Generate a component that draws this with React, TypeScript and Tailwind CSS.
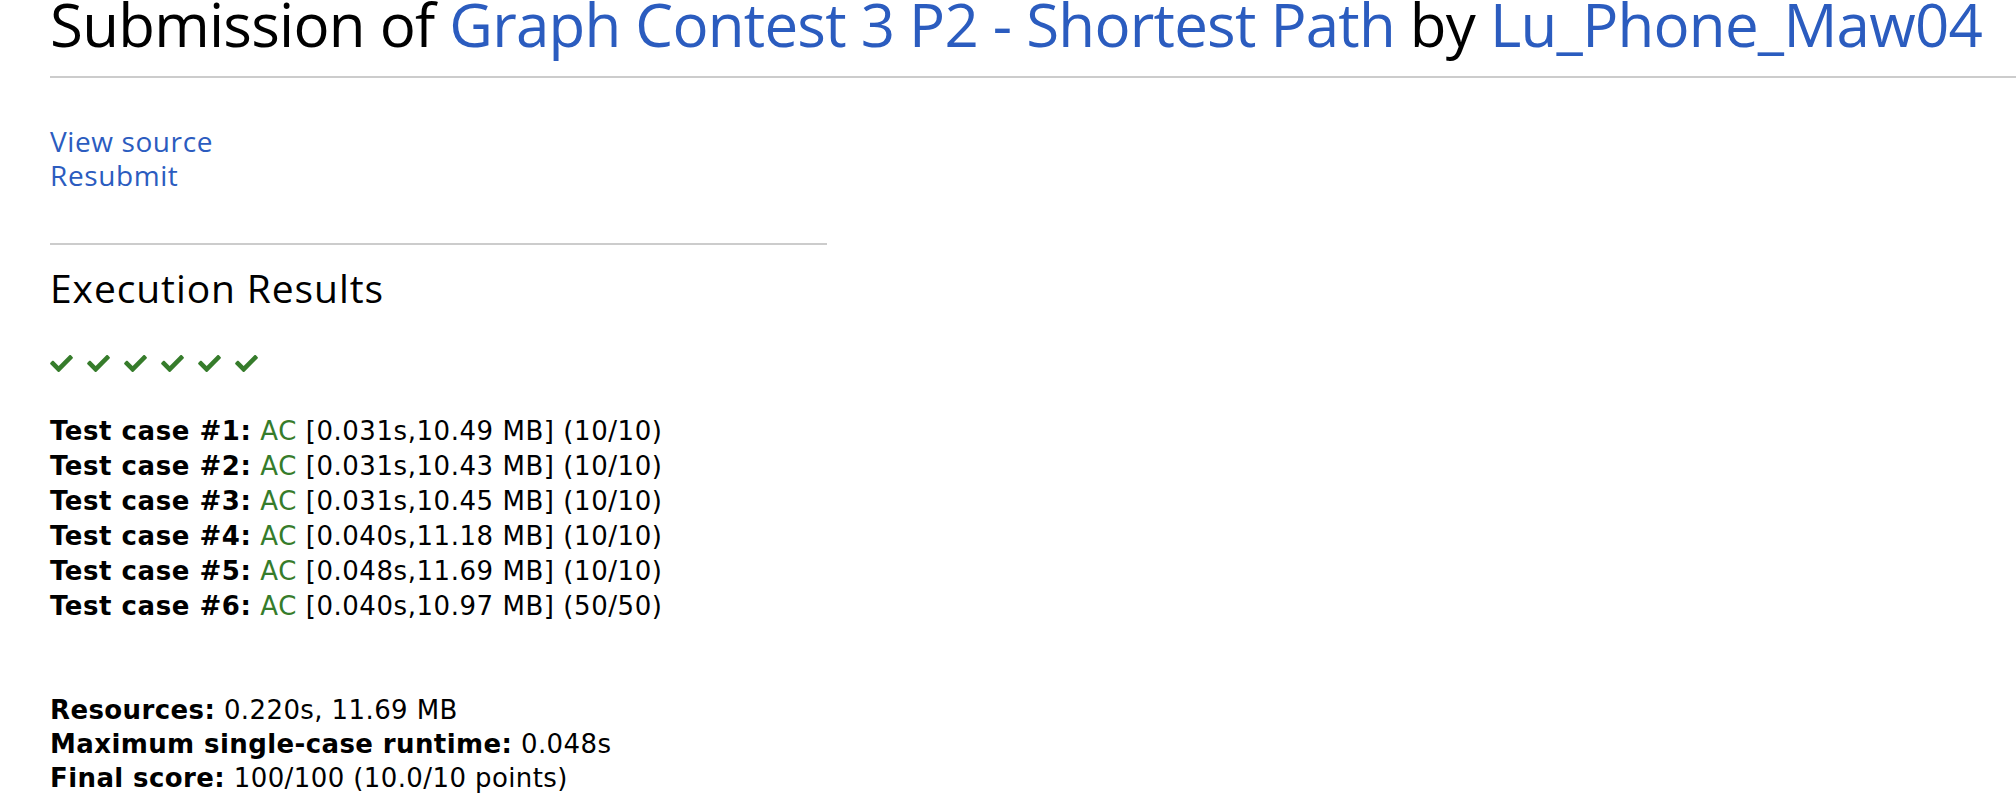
import React from "react";

const Check = () => (
  <svg width="23" height="17" viewBox="0 65 512 382" className="fill-[#367c2b]">
    <path d="M173.898 439.404l-166.4-166.4c-9.997-9.997-9.997-26.206 0-36.204l36.203-36.204c9.997-9.998 26.207-9.998 36.204 0L192 312.69 432.095 72.596c9.997-9.997 26.207-9.997 36.204 0l36.203 36.204c9.997 9.997 9.997 26.206 0 36.204l-294.4 294.401c-9.998 9.997-26.207 9.997-36.204-.001z" />
  </svg>
);

const cases = [
  ["1", "0.031s,10.49 MB", "(10/10)"],
  ["2", "0.031s,10.43 MB", "(10/10)"],
  ["3", "0.031s,10.45 MB", "(10/10)"],
  ["4", "0.040s,11.18 MB", "(10/10)"],
  ["5", "0.048s,11.69 MB", "(10/10)"],
  ["6", "0.040s,10.97 MB", "(50/50)"],
];

export default function App() {
  return (
    <div className="bg-white min-h-[806px] pl-[50px] text-black">
      <h2
        className="text-[60px] leading-[48px] tracking-[-0.75px] pt-0 pb-[28px] border-b-2 border-[#cccccc] whitespace-nowrap"
        style={{ fontFamily: '"Open Sans", "Noto Sans", sans-serif' }}
      >
        Submission of <a className="text-[#2b5cbf]">Graph Contest 3 P2 - Shortest Path</a> by{" "}
        <a className="text-[#2b5cbf]">Lu_Phone_Maw04</a>
      </h2>
      <div className="w-[777px]">
        <div
          className="mt-[46px] text-[28px] leading-[34px] tracking-[0.6px] text-[#2b5cbf]"
          style={{ fontFamily: '"Open Sans", "Noto Sans", sans-serif' }}
        >
          <div>View source</div>
          <div>Resubmit</div>
        </div>
        <div className="mt-[51px] border-t-2 border-[#cccccc]" />
        <h3
          className="mt-[19px] text-[39px] leading-[48px] tracking-[0.9px]"
          style={{ fontFamily: '"Open Sans", "Noto Sans", sans-serif' }}
        >
          Execution Results
        </h3>
        <div className="mt-[43px] flex gap-[14px] h-[17px]">
          {cases.map((c) => (
            <Check key={c[0]} />
          ))}
        </div>
        <div
          className="mt-[42px] text-[26px] leading-[35px] tracking-[0.55px]"
          style={{ fontFamily: '"DejaVu Sans", sans-serif' }}
        >
          {cases.map((c) => (
            <div key={c[0]} className="whitespace-nowrap">
              <b>Test case #{c[0]}:</b> <span className="text-[#367c2b]">AC</span> [{c[1]}] {c[2]}
            </div>
          ))}
        </div>
        <div
          className="mt-[69px] text-[26px] leading-[34px] tracking-[0.4px]"
          style={{ fontFamily: '"DejaVu Sans", sans-serif' }}
        >
          <div>
            <b>Resources:</b> 0.220s, 11.69 MB
          </div>
          <div>
            <b>Maximum single-case runtime:</b> 0.048s
          </div>
          <div>
            <b>Final score:</b> 100/100 (10.0/10 points)
          </div>
        </div>
      </div>
    </div>
  );
}
